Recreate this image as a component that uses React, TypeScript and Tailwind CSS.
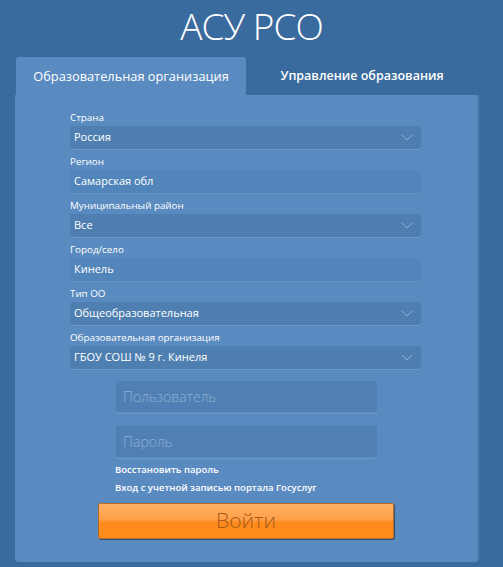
import React from 'react';

const fields = [
  { label: 'Страна', value: 'Россия', select: true },
  { label: 'Регион', value: 'Самарская обл', select: false },
  { label: 'Муниципальный район', value: 'Все', select: true },
  { label: 'Город/село', value: 'Кинель', select: false },
  { label: 'Тип ОО', value: 'Общеобразовательная', select: true },
  { label: 'Образовательная организация', value: 'ГБОУ СОШ № 9 г. Кинеля', select: true },
];

const Chevron = () => (
  <svg width="12" height="7" viewBox="0 0 12 7" fill="none">
    <path d="M1 1l5 5 5-5" stroke="#8fb2d6" strokeWidth="1" />
  </svg>
);

export default function App() {
  return (
    <div className="w-[503px] h-[567px] overflow-hidden bg-[#3a6b9e] text-white" style={{ fontFamily: '"Open Sans", "DejaVu Sans", sans-serif' }}>
      <h1 className="text-center text-[37px] font-light leading-none pt-[7px] h-[57px] tracking-[-1px]">АСУ РСО</h1>
      <div className="pl-[16px] flex h-[38px]">
        <div className="w-[230px] bg-[#5a8bc0] rounded-t-[3px] flex items-center justify-center text-[12.8px] pt-[1px]">
          Образовательная организация
        </div>
        <div className="w-[232px] flex items-center justify-center text-[12.5px] font-semibold pt-[1px]">
          Управление образования
        </div>
      </div>
      <div className="ml-[15px] w-[464px] h-[467px] bg-[#5a8bc0] border-r-[2px] border-r-[#4f7fb3] rounded-b-[4px] pt-[17px]">
        <div className="pl-[55px] w-[406px] flex flex-col">
          {fields.map((f) => (
            <div key={f.label} className="h-[44px]">
              <div className="text-[9.8px] leading-[12px] h-[12px] text-white">{f.label}</div>
              <div className={`mt-[2px] h-[23px] rounded-[3px] flex items-center justify-between pl-[4px] pr-[8px] text-[11px] ${f.select ? 'bg-[#4f7fb1] shadow-[0_1px_0_rgba(255,255,255,0.12)]' : 'bg-[#5285ba] shadow-[0_1px_0_rgba(255,255,255,0.1)]'}`}>
                <span>{f.value}</span>
                {f.select && <Chevron />}
              </div>
            </div>
          ))}
        </div>
        <div className="pl-[100px] pt-[4px] flex flex-col">
          <div className="w-[263px] h-[33px] rounded-[3px] bg-[#5080b3] border border-[#5a8ac0] shadow-[0_1px_0_rgba(255,255,255,0.12)] flex items-center pl-[7px] text-[14px] font-light text-[#90b0d2]">
            Пользователь
          </div>
          <div className="mt-[12px] w-[263px] h-[33px] rounded-[3px] bg-[#5080b3] border border-[#5a8ac0] shadow-[0_1px_0_rgba(255,255,255,0.12)] flex items-center pl-[7px] text-[14px] font-light text-[#90b0d2]">
            Пароль
          </div>
          <div className="mt-[6px] text-[9.5px] font-semibold leading-[12px]">Восстановить пароль</div>
          <div className="mt-[6px] text-[9.5px] font-semibold leading-[12px]">Вход с учетной записью портала Госуслуг</div>
        </div>
        <div className="pl-[83px] pt-[9px]">
          <div className="w-[296px] h-[36px] rounded-[2px] border border-[#b66a2a] shadow-[1px_1px_1px_rgba(0,0,0,0.45)] bg-[linear-gradient(to_bottom,#ffb064_0%,#ffa04a_45%,#ff8a1c_55%,#ff8c1a_100%)] flex items-center justify-center text-[21px] font-light text-[#a85a18]">
            Войти
          </div>
        </div>
      </div>
    </div>
  );
}
